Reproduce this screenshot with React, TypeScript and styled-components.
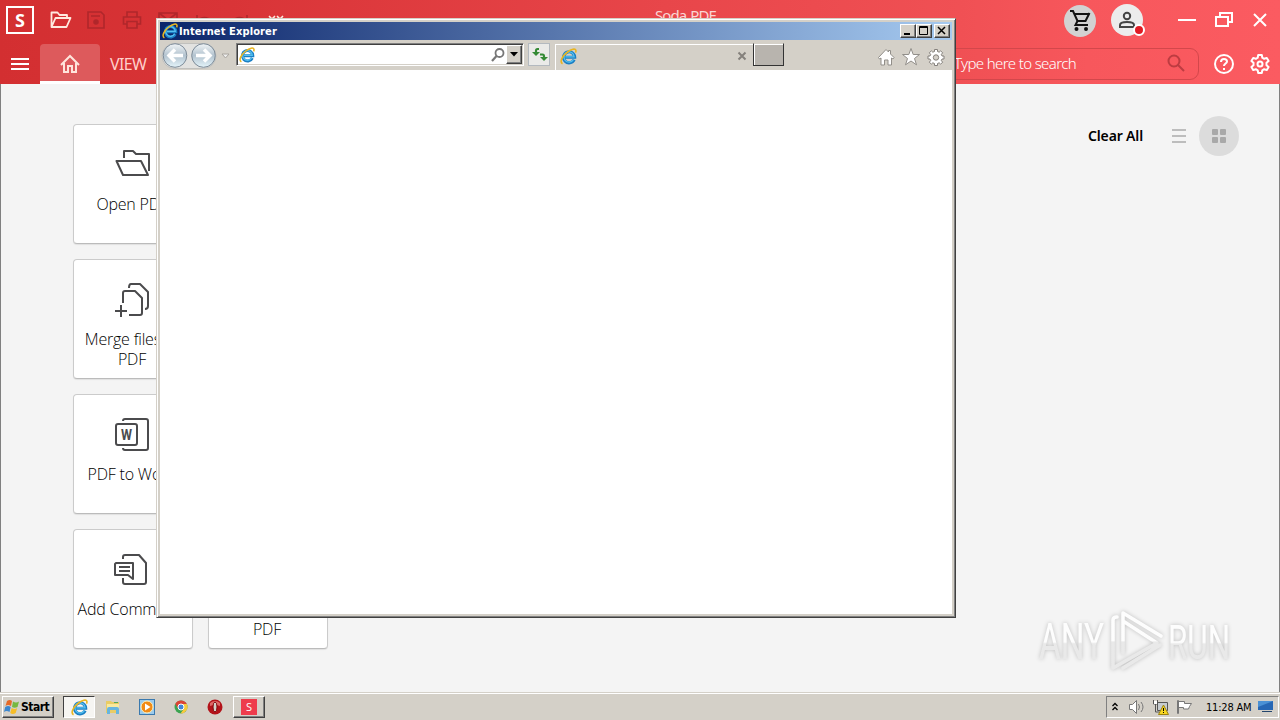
import React from 'react';
import styled, { createGlobalStyle, css } from 'styled-components';

const GlobalStyle = createGlobalStyle`
  * {
    box-sizing: border-box;
  }

  body {
    margin: 0;
    overflow: hidden;
    font-family: 'DejaVu Sans Condensed', 'DejaVu Sans', sans-serif;
    color: #000;
  }

  svg {
    display: block;
    flex-shrink: 0;
  }
`;

const raised = css`
  border: 1px solid;
  border-color: #fff #404040 #404040 #fff;
  box-shadow: inset -1px -1px 0 #808080;
`;

const Desktop = styled.div`
  position: relative;
  display: flex;
  flex-direction: column;
  width: 1280px;
  height: 720px;
  overflow: hidden;
  background-color: #d4d0c8;
`;

const SodaApp = styled.div`
  height: 692px;
  display: flex;
  flex-direction: column;
  background-color: #f4f4f4;
`;

const Header = styled.header`
  height: 84px;
  flex-shrink: 0;
  background: linear-gradient(90deg, #d32f31 0%, #d93437 18%, #e8464a 52%, #f05054 75%, #f7575c 85%, #fb5b61 100%);
`;

const TitleRow = styled.div`
  height: 44px;
  display: grid;
  grid-template-columns: 510px 1fr 510px;
`;

const QuickAccess = styled.div`
  display: flex;
  align-items: flex-start;
  padding: 6px 0 0 6px;
`;

const Logo = styled.div`
  width: 28px;
  height: 28px;
  margin-right: 12px;
  border: 2px solid #fff;
  color: #fff;
  font: bold 18px/24px 'Open Sans', sans-serif;
  text-align: center;
`;

const QuickButton = styled.div<{ $disabled?: boolean }>`
  width: 36px;
  padding: 4px 0 0 4px;
  color: ${({ $disabled }) => ($disabled ? '#b0272b' : '#ffe9df')};
`;

const AppTitle = styled.div`
  padding: 5px 0 0 145px;
  font: 15px/20px 'Noto Sans', sans-serif;
  letter-spacing: -0.9px;
  word-spacing: 1px;
  letter-spacing: -0.9px;
  color: #fbd5d3;
`;

const HeaderActions = styled.div`
  display: flex;
  justify-content: flex-end;
  align-items: flex-start;
  padding-top: 4px;
`;

const RoundButton = styled.div<{ $color: string; $top: number }>`
  position: relative;
  display: flex;
  align-items: center;
  justify-content: center;
  width: 32px;
  height: 32px;
  margin: ${({ $top }) => $top}px 15px 0 0;
  border-radius: 50%;
  background-color: ${({ $color }) => $color};
`;

const StatusDot = styled.span`
  position: absolute;
  right: -2px;
  bottom: 0;
  width: 12px;
  height: 12px;
  border: 2px solid #fff;
  border-radius: 50%;
  background-color: #e01b24;
`;

const WindowControls = styled.div`
  display: flex;
  gap: 18px;
  padding: 7px 11px 0 19px;
`;

const TabRow = styled.div`
  height: 40px;
  display: flex;
`;

const MenuButton = styled.div`
  width: 40px;
  padding: 14px 0 0 11px;
`;

const HomeTab = styled.div`
  width: 60px;
  padding: 9px 0 0 19px;
  border-radius: 4px 4px 0 0;
  background-color: #dd5a5c;
  box-shadow: inset 0 -3px 0 #fff;
`;

const ViewTab = styled.div`
  padding-left: 10px;
  font: 16px/40px 'Noto Sans', sans-serif;
  letter-spacing: -0.6px;
  color: #ffd0cb;
`;

const SearchBox = styled.div`
  display: flex;
  align-items: center;
  justify-content: space-between;
  width: 265px;
  height: 32px;
  margin: 4px 14px 0 auto;
  padding: 0 12px 2px 19px;
  border: 1px solid #d3474b;
  border-radius: 9px;
  font: 300 15px 'Noto Sans', sans-serif;
  letter-spacing: -0.62px;
  color: #fff;
`;

const HeaderIcons = styled.div`
  display: flex;
  gap: 14px;
  padding: 9px 9px 0 0;
`;

const Home = styled.main`
  flex: 1;
  display: flex;
  justify-content: space-between;
  align-items: flex-start;
  border: solid #808080;
  border-width: 0 1px;
  padding: 32px 40px 0 72px;
`;

const CardGrid = styled.div`
  display: grid;
  grid-template-columns: repeat(2, 120px);
  grid-auto-rows: 120px;
  gap: 15px;
  padding-top: 8px;
`;

const Card = styled.div`
  display: flex;
  flex-direction: column;
  align-items: center;
  padding: 20px 2px 0 0;
  border: 1px solid #cbcbcb;
  border-bottom-color: #bbb;
  border-radius: 4px;
  background-color: #fff;
  box-shadow: 0 1px 1px rgba(0, 0, 0, 0.08);
`;

const CardIcon = styled.div`
  width: 40px;
  height: 40px;
  margin-bottom: 9px;
`;

const CardLabel = styled.div`
  height: 20px;
  font: 300 16px/20px 'Open Sans', sans-serif;
  letter-spacing: -0.2px;
  white-space: nowrap;
`;

const ViewOptions = styled.div`
  display: flex;
  align-items: center;
`;

const ClearAll = styled.span`
  margin-right: 29px;
  font: 600 14px/20px 'Noto Sans', sans-serif;
  letter-spacing: -0.15px;
`;

const GridToggle = styled.div`
  display: grid;
  place-items: center;
  width: 40px;
  height: 40px;
  margin-left: 13px;
  border-radius: 50%;
  background-color: #dcdcdc;
`;

const Watermark = styled.div`
  position: absolute;
  left: 1030px;
  top: 602px;
`;

/* Internet Explorer window */

const IeWindow = styled.section`
  position: absolute;
  left: 156px;
  top: 18px;
  width: 800px;
  height: 600px;
  padding: 2px;
  display: flex;
  flex-direction: column;
  border: 1px solid;
  border-color: #d4d0c8 #404040 #404040 #d4d0c8;
  background-color: #d4d0c8;
  box-shadow: inset 1px 1px 0 #fff, inset -1px -1px 0 #808080;
`;

const TitleBar = styled.div`
  display: flex;
  align-items: center;
  height: 18px;
  margin: 1px 1px 0;
  padding: 0 2px;
  background: linear-gradient(90deg, #0a246a, #a6caf0);
  color: #fff;
  font: bold 11px/18px 'DejaVu Sans Condensed', sans-serif;
`;

const TitleText = styled.span`
  flex: 1;
  margin-left: 1px;
  padding-top: 1px;
  letter-spacing: 0.12px;
`;

const CaptionButton = styled.div<{ $gap?: number }>`
  ${raised}
  width: 16px;
  height: 14px;
  margin-left: ${({ $gap = 0 }) => $gap}px;
  background-color: #d4d0c8;
`;

const Toolbar = styled.div`
  display: flex;
  height: 30px;
  padding: 3px 7px 0 2px;
`;

const NavButtons = styled.div`
  width: 75px;
`;

const AddressBar = styled.div`
  display: flex;
  align-items: center;
  width: 288px;
  height: 23px;
  padding: 0 1px 0 2px;
  border: 1px solid;
  border-color: #808080 #fff #fff #808080;
  box-shadow: inset 1px 1px 0 #404040, inset -1px -1px 0 #d4d0c8;
  background-color: #fff;

  svg:nth-child(2) {
    margin-left: auto;
  }
`;

const DropButton = styled.div`
  ${raised}
  display: grid;
  place-items: center;
  width: 16px;
  height: 19px;
  background-color: #d4d0c8;
`;

const RefreshButton = styled.div`
  width: 22px;
  height: 23px;
  margin: 0 5px 0 4px;
  padding: 2px;
  border: 1px solid #b3b9bf;
  background-color: #eaeae8;
`;

const Tab = styled.div`
  display: flex;
  align-items: center;
  justify-content: space-between;
  width: 198px;
  height: 26px;
  margin-top: 1px;
  padding: 0 6px 3px 4px;
  border-top: 1px solid #fff;
  border-left: 1px solid #fff;
`;

const NewTab = styled.div`
  width: 31px;
  height: 23px;
  border: 1px solid #333;
  border-top-color: #d4d0c8;
  background-color: #b8b4ae;
  box-shadow: inset 1px 1px 0 #fff;
`;

const ToolIcons = styled.div`
  display: flex;
  gap: 5px;
  margin: 4px 0 0 auto;
`;

const PageArea = styled.div`
  flex: 1;
  background-color: #fff;
  margin: 0 1px 1px 1px;
`;

/* Taskbar */

const Taskbar = styled.footer`
  display: flex;
  height: 28px;
  padding: 3px 1px 2px 2px;
  border-top: 1px solid #d4d0c8;
  background-color: #d4d0c8;
  box-shadow: inset 0 1px 0 #fff;
`;

const StartButton = styled.div`
  ${raised}
  display: flex;
  align-items: center;
  gap: 1px;
  width: 52px;
  height: 22px;
  margin-right: 9px;
  padding-left: 1px;
  font: bold 12px/20px 'DejaVu Sans Condensed', sans-serif;
  letter-spacing: -0.5px;
`;

const TaskButton = styled.div<{ $state?: 'pressed' | 'raised' }>`
  display: grid;
  place-items: center;
  width: 32px;
  height: 22px;
  margin-right: 2px;
  ${({ $state }) => $state === 'raised' && raised}
  ${({ $state }) =>
    $state === 'pressed' &&
    css`
      border: 1px solid;
      border-color: #404040 #fff #fff #404040;
      background-color: #f6f5f2;
    `}
`;

const SodaTaskIcon = styled.div`
  width: 16px;
  height: 16px;
  background-color: #ee3c4c;
  color: #fff;
  font: 11px/16px 'Open Sans', sans-serif;
  text-align: center;
`;

const Tray = styled.div`
  display: flex;
  align-items: center;
  width: 173px;
  height: 22px;
  margin-left: auto;
  padding: 0 1px 0 4px;
  border: 1px solid;
  border-color: #808080 #fff #fff #808080;
`;

const Clock = styled.span`
  margin: 0 7px 0 12px;
  padding-top: 1px;
  font: 11px/20px 'DejaVu Sans Condensed', sans-serif;
  letter-spacing: -0.2px;
  white-space: nowrap;
`;

const IeIcon = ({ size = 16 }: { size?: number }) => (
  <svg width={size} height={size} viewBox="0 0 16 16" fill="none">
    <path d="M13.3 11a5.2 5.2 0 1 1 .5-2.3H4.8" stroke="#1b7fc4" strokeWidth="3" />
    <path d="M12.7 10.8a4.8 4.8 0 1 1 .6-2.4H5" stroke="#55c1f0" strokeWidth="1.3" />
    <path d="M2.4 14.8C-.6 13.2 2 7.6 6.8 4 10.6 1 14.6.1 15 2.4c.1.7-.1 1.300-.4 2" stroke="#e9b521" strokeWidth="1.5" />
  </svg>
);

const FolderOutline = () => (
  <svg width="22" height="20" viewBox="0 0 22 20" fill="none" stroke="currentColor" strokeWidth="1.8" strokeLinejoin="round">
    <path d="M1.500 17V2.500h6l2 2.500H17v3M1.500 17L5.500 8H20.500L16.500 17z" />
  </svg>
);

const SaveIcon = () => (
  <svg width="20" height="20" viewBox="0 0 20 20" fill="none" stroke="currentColor" strokeWidth="1.6">
    <path d="M2 2h13l3 3v13H2zM5 6h9" />
    <circle cx="10" cy="12" r="2" fill="currentColor" />
  </svg>
);

const PrintIcon = () => (
  <svg width="20" height="20" viewBox="0 0 20 20" fill="none" stroke="currentColor" strokeWidth="1.6">
    <path d="M5 7V2h10v5M5 14H1.500V7h17v7H15M5 11.500h10V18H5z" />
  </svg>
);

const MailIcon = () => (
  <svg width="20" height="20" viewBox="0 0 20 20" fill="none" stroke="currentColor" strokeWidth="1.6">
    <path d="M1 3h18v14H1zM1 3l9 7 9-7" />
  </svg>
);

const CurveArrow = ({ flip }: { flip?: boolean }) => (
  <svg width="20" height="20" viewBox="0 0 20 20" fill="none" stroke="currentColor" strokeWidth="1.6">
    <path d={flip ? 'M2 16C2 6 12 6 17 11M17 5v6h-6' : 'M18 16C18 6 8 6 3 11M3 5v6h6'} />
  </svg>
);

const ChevronMarks = () => (
  <svg width="20" height="20" viewBox="0 0 20 20" fill="none" stroke="currentColor" strokeWidth="1.6">
    <path d="M3 6l3 3 3-3M11 6l3 3 3-3" />
  </svg>
);

const gearPath =
  'M10.200 2h3.600l.5 2.700 1.900 1.100 2.600-.9 1.800 3.100-2.100 1.800v2.400l2.100 1.800-1.800 3.100-2.600-.9-1.900 1.100-.5 2.700h-3.600l-.5-2.700-1.900-1.100-2.600.9-1.800-3.100 2.100-1.800V9.800L3.400 8l1.800-3.100 2.600.9 1.900-1.100z';

const CardArt = ({ kind }: { kind: string }) => (
  <svg width="40" height="40" viewBox="0 0 40 40" fill="none" stroke="#4b4b4d" strokeWidth="2" strokeLinejoin="round">
    {kind === 'open' && <path d="M12 13V6h9l3 3h13v17M4.500 16h24.500l7 14H11z" />}
    {kind === 'merge' && <path d="M11 23v-10q0-2 2-2h10l7 7v15q0 2-2 2H17M17 8q0-4 2-4h9l8 8v14q0 3-3 3M3 31h12M9 25v12" />}
    {kind === 'word' && (
      <>
        <path d="M11 6q0-2 2-2h21q2 0 2 2v27q0 2-2 2H13q-2 0-2-2" />
        <rect x="4" y="9" width="21" height="21" rx="2" />
        <text x="9" y="25" textLength="11" lengthAdjust="spacingAndGlyphs" fontFamily="Roboto, sans-serif" fontSize="14.500" fontWeight="700" fill="#4b4b4d" stroke="none">W</text>
      </>
    )}
    {kind === 'comment' && (
      <>
        <path d="M11 9V7q0-2 2-2h14l7 8v19q0 2-2 2H13q-2 0-2-2v-4" />
        <path d="M4 13h17v16l-5-4H3V14zM7 17h11M7 21h11" />
      </>
    )}
  </svg>
);

const cards = [
  { kind: 'open', lines: ['Open PDF'] },
  { kind: '', lines: [] },
  { kind: 'merge', lines: ['Merge files to', 'PDF'] },
  { kind: '', lines: [] },
  { kind: 'word', lines: ['PDF to Word'] },
  { kind: '', lines: [] },
  { kind: 'comment', lines: ['Add Comments'] },
  { kind: '', lines: ['', 'PDF'] },
];

const SodaHeader = () => (
  <Header>
    <TitleRow>
      <QuickAccess>
        <Logo>S</Logo>
        <QuickButton><FolderOutline /></QuickButton>
        <QuickButton $disabled><SaveIcon /></QuickButton>
        <QuickButton $disabled><PrintIcon /></QuickButton>
        <QuickButton $disabled><MailIcon /></QuickButton>
        <QuickButton $disabled><CurveArrow /></QuickButton>
        <QuickButton $disabled><CurveArrow flip /></QuickButton>
        <QuickButton><ChevronMarks /></QuickButton>
      </QuickAccess>
      <AppTitle>Soda PDF</AppTitle>
      <HeaderActions>
        <RoundButton $color="#d2d2d2" $top={1}>
          <svg width="24" height="24" viewBox="0 0 24 24" fill="none" stroke="#111" strokeWidth="2">
            <path d="M2 2h3l4.500 10h8L21.500 4M6 5h15M9.500 12l-2 4H20" />
            <circle cx="8.500" cy="20" r="1" fill="#111" />
            <circle cx="18" cy="20" r="1" fill="#111" />
          </svg>
        </RoundButton>
        <RoundButton $color="#ececec" $top={0}>
          <svg width="20" height="20" viewBox="0 0 20 20" fill="none" stroke="#444" strokeWidth="2">
            <circle cx="10" cy="6" r="3.200" />
            <path d="M3 17v-2q0-3 7-3t7 3v2z" />
          </svg>
          <StatusDot />
        </RoundButton>
        <WindowControls>
          <svg width="20" height="18" stroke="#fff" strokeWidth="2"><path d="M1 9h18" /></svg>
          <svg width="18" height="18" fill="none" stroke="#fff" strokeWidth="2"><path d="M1 6h12v9H1zM5 6V2h12v9h-4" /></svg>
          <svg width="18" height="18" stroke="#fff" strokeWidth="2"><path d="M3 3l12 12M15 3L3 15" /></svg>
        </WindowControls>
      </HeaderActions>
    </TitleRow>
    <TabRow>
      <MenuButton>
        <svg width="18" height="13" stroke="#fff" strokeWidth="2"><path d="M0 1h18M0 6h18M0 11h18" /></svg>
      </MenuButton>
      <HomeTab>
        <svg width="22" height="22" viewBox="0 0 22 22" fill="none" stroke="#ffe5dc" strokeWidth="2">
          <path d="M2 12l9-9 9 9M5 10v9h4v-6h4v6h4v-9" />
        </svg>
      </HomeTab>
      <ViewTab>VIEW</ViewTab>
      <SearchBox>
        <span>Type here to search</span>
        <svg width="20" height="20" viewBox="0 0 20 20" fill="none" stroke="#bd3c41" strokeWidth="2">
          <circle cx="8" cy="8" r="5.500" />
          <path d="M12 12l6 6" />
        </svg>
      </SearchBox>
      <HeaderIcons>
        <svg width="22" height="22" viewBox="0 0 22 22" fill="none" stroke="#fff" strokeWidth="2">
          <circle cx="11" cy="11" r="9" />
          <path d="M8 9q0-3 3-3t3 2.500c0 2-3 2.200-3 4.500M11 15v2" />
        </svg>
        <svg width="22" height="22" viewBox="1 0 22 22" fill="none" stroke="#fff" strokeWidth="2" strokeLinejoin="round">
          <path d={gearPath} />
          <circle cx="12" cy="11" r="2.500" />
        </svg>
      </HeaderIcons>
    </TabRow>
  </Header>
);

const AnyRun = () => (
  <Watermark>
    <svg width="250" height="80" viewBox="0 0 250 80" style={{ filter: 'drop-shadow(0 0 2px rgba(0,0,0,.22))' }}>
      <defs>
        <linearGradient id="fade" x1="0" y1="0" x2="0" y2="1">
          <stop offset=".5" stopColor="#fdfdfd" />
          <stop offset=".53" stopColor="#e9e9e9" />
        </linearGradient>
      </defs>
      <g fill="url(#fade)" fontFamily="Roboto, sans-serif" fontSize="49">
        <text transform="translate(9 57) scale(.68 1)">ANY</text>
        <text transform="translate(138 57) scale(.64 1)">RUN</text>
      </g>
      <g fill="none" stroke="url(#fade)" strokeWidth="3.500" strokeLinejoin="round" strokeLinecap="round">
        <path d="M93 51V11l38 23M93 19l34 22-44 25V18q0-3 4-3M93 66l37-23" />
      </g>
    </svg>
  </Watermark>
);

const InternetExplorer = () => (
  <IeWindow>
    <TitleBar>
      <IeIcon />
      <TitleText>Internet Explorer</TitleText>
      <CaptionButton>
        <svg width="14" height="12"><path d="M3 8h6v2H3z" /></svg>
      </CaptionButton>
      <CaptionButton>
        <svg width="14" height="12" fill="none" stroke="#000"><path d="M2.500 1.500h8v8h-8zM2 2.500h9" /></svg>
      </CaptionButton>
      <CaptionButton $gap={2}>
        <svg width="14" height="12" stroke="#000" strokeWidth="1.500"><path d="M3 2l7 7M10 2L3 9" /></svg>
      </CaptionButton>
    </TitleBar>
    <Toolbar>
      <NavButtons>
        <svg width="75" height="27" viewBox="0 0 75 27">
          <defs>
            <linearGradient id="nav" x1="0" y1="0" x2="0" y2="1">
              <stop offset="0" stopColor="#f1f5f7" />
              <stop offset=".5" stopColor="#b3c3cf" />
              <stop offset="1" stopColor="#e4f4fa" />
            </linearGradient>
          </defs>
          <rect x="1" y="0.500" width="54" height="25" rx="12.500" fill="#e2e2e0" stroke="#c0c0bd" />
          <g fill="url(#nav)" stroke="#7d8b98">
            <circle cx="14" cy="12.500" r="11.800" />
            <circle cx="42.500" cy="12.500" r="11.800" />
          </g>
          <g fill="none" stroke="#fff" strokeWidth="3.500">
            <path d="M22 12.500H8M14 6.500l-6 6 6 6" />
            <path d="M35 12.500h14M43 6.500l6 6-6 6" />
          </g>
          <path d="M61 11h7l-3.500 4z" fill="#eee" stroke="#aaa6a0" />
        </svg>
      </NavButtons>
      <AddressBar>
        <IeIcon />
        <svg width="16" height="16" viewBox="0 0 16 16" fill="none" stroke="#777" strokeWidth="1.800">
          <circle cx="9.500" cy="6" r="4" />
          <path d="M6.500 9L2 14" strokeWidth="2.200" />
        </svg>
        <DropButton>
          <svg width="8" height="5"><path d="M0 0h8L4 4.500z" /></svg>
        </DropButton>
      </AddressBar>
      <RefreshButton>
        <svg width="18" height="17" viewBox="0 0 18 17" fill="none" stroke="#348a35" strokeWidth="2.200">
          <path d="M8 3H6.500q-1.500 0-1.500 2v2" />
          <path d="M1 6h8L5 10z" fill="#348a35" stroke="none" />
          <path d="M9 8.500h2.500q1.500 0 1.500 2v1" />
          <path d="M9 11h8l-4 4z" fill="#348a35" stroke="none" />
        </svg>
      </RefreshButton>
      <Tab>
        <IeIcon size={17} />
        <svg width="10" height="10" stroke="#85817c" strokeWidth="2"><path d="M1.500 1.500l7 7M8.500 1.500l-7 7" /></svg>
      </Tab>
      <NewTab />
      <ToolIcons>
        <svg width="20" height="20" viewBox="0 0 20 20" fill="#fff" stroke="#918e89">
          <path d="M2.500 10.500l7.500-8 2.500 2.500V3.500h2v3.500l3.500 3.500-1 1.500-1.500-1v7H12v-5H8.500v5H5v-7l-1.500 1z" />
        </svg>
        <svg width="20" height="20" viewBox="0 0 20 20" fill="#fff" stroke="#918e89">
          <path d="M10 1.500l2.200 6h6.300l-5 4 2 6.300-5.500-3.800-5.500 3.800 2-6.300-5-4h6.300z" />
        </svg>
        <svg width="20" height="20" viewBox="2 1 20 20" fill="#fff" stroke="#85817c" strokeLinejoin="round">
          <path d="M10.500 3.500h3v2l1.700.7 1.400-1.400 2.100 2.100-1.400 1.400.7 1.700h2v3h-2l-.7 1.700 1.400 1.400-2.100 2.100-1.400-1.400-1.700.7v2h-3v-2l-1.700-.7-1.400 1.400-2.100-2.100 1.400-1.400-.7-1.700h-2v-3h2l.7-1.700-1.400-1.400 2.100-2.100 1.400 1.400 1.700-.7z" />
          <circle cx="12" cy="11.500" r="2.700" fill="#d4d0c8" />
        </svg>
      </ToolIcons>
    </Toolbar>
    <PageArea />
  </IeWindow>
);

const WindowsTaskbar = () => (
  <Taskbar>
    <StartButton>
      <svg width="16" height="16" viewBox="0 0 16 16">
        <path d="M3 2q3-2 5 0L7 7Q4 5 1.500 7z" fill="#e66a28" />
        <path d="M9 2.500q3 2 6 0L13.500 8q-3 1.500-5.500 0z" fill="#76b83f" />
        <path d="M1.200 8q3-2 5.500 0l-1.200 5q-3-2-5.500 0z" fill="#3c87cf" />
        <path d="M7.700 9q3 2 5.500 0l-1.500 5q-3 2-5.500 0z" fill="#f6bd28" />
      </svg>
      Start
    </StartButton>
    <TaskButton $state="pressed"><IeIcon size={17} /></TaskButton>
    <TaskButton>
      <svg width="16" height="16" viewBox="0 0 16 16">
        <path d="M1 2h5l1 1h7v11H1z" fill="#e9cc65" />
        <path d="M2 5h12v5H2z" fill="#f9e99d" />
        <path d="M2 15v-5q0-2 2-2h8q2 0 2 2v5h-3v-4H5v4z" fill="#67b5df" />
        <path d="M9 3h4v1H9z" fill="#55a75c" />
      </svg>
    </TaskButton>
    <TaskButton>
      <svg width="16" height="16" viewBox="0 0 16 16">
        <rect x=".5" y=".5" width="15" height="15" fill="#9bcbed" stroke="#3a79ae" />
        <circle cx="8" cy="8" r="6" fill="#f18b16" stroke="#fff1bd" />
        <path d="M6 4.500L11.500 8 6 11.500z" fill="#fff" />
      </svg>
    </TaskButton>
    <TaskButton>
      <svg width="14" height="14" viewBox="0 0 14 14">
        <circle cx="7" cy="7" r="6.500" fill="#3ba351" />
        <path d="M1.300 3.800A6.500 6.500 0 0 1 12.800 4H7L4 8.500z" fill="#dc4335" />
        <path d="M12.800 4A6.500 6.500 0 0 1 6.500 13.500L10 8.500 7 4z" fill="#f7ca3d" />
        <circle cx="7" cy="7" r="3" fill="#4285d8" stroke="#fff" />
      </svg>
    </TaskButton>
    <TaskButton>
      <svg width="16" height="16" viewBox="0 0 16 16">
        <circle cx="8" cy="8" r="7.500" fill="#b3131a" />
        <path d="M3 4q5-4 10 0v3q-5-2-10 0z" fill="#df6867" />
        <ellipse cx="8" cy="8" rx="2" ry="5" fill="#d4d0c8" stroke="#81070d" />
      </svg>
    </TaskButton>
    <TaskButton $state="raised"><SodaTaskIcon>S</SodaTaskIcon></TaskButton>
    <Tray>
      <svg width="8" height="10" fill="none" stroke="#000" strokeWidth="1.300"><path d="M1.500 4L4 1.500 6.500 4M1.500 8L4 5.500 6.500 8" /></svg>
      <svg width="18" height="16" viewBox="0 0 18 16" fill="#fff" stroke="#777" style={{ marginLeft: 9 }}>
        <path d="M1.500 5.500h3l4-4v13l-4-4h-3z" />
        <path d="M10.500 5q2 3 0 6M13 3q4 5 0 10" fill="none" />
      </svg>
      <svg width="18" height="16" viewBox="0 0 18 16" style={{ marginLeft: 6 }}>
        <path d="M5.500 3.500h10v8h-10z" fill="#c7ccd0" stroke="#555" />
        <path d="M1.500 1v4h4V1M3.500 5v8h4" fill="none" stroke="#555" />
        <path d="M2 2h3v3H2z" fill="#fff" />
        <path d="M11.500 6l5 9.500h-10z" fill="#f8d721" stroke="#9b8210" />
        <path d="M11 9h1v3h-1zM11 13h1v1h-1z" />
      </svg>
      <svg width="18" height="16" viewBox="0 0 18 16" fill="#fff" stroke="#777" style={{ marginLeft: 6 }}>
        <path d="M1.500 1.500h1v13h-1zM2.500 2.500h6v2h7l-2 3-1 2.500h-5V8.500h-5z" />
      </svg>
      <Clock>11:28 AM</Clock>
      <svg width="16" height="14" viewBox="0 0 16 14">
        <path d="M0 1h15v9H0z" fill="#2767b4" />
        <path d="M0 1h15L0 7z" fill="#4b91d5" />
        <path d="M4 11h10v1H4z" fill="#23456c" />
      </svg>
    </Tray>
  </Taskbar>
);

const App: React.FC = () => {
  return (
    <>
      <GlobalStyle />
      <Desktop>
        <SodaApp>
          <SodaHeader />
          <Home>
            <CardGrid>
              {cards.map((card, index) => (
                <Card key={index}>
                  <CardIcon><CardArt kind={card.kind} /></CardIcon>
                  {card.lines.map((line, i) => (
                    <CardLabel key={i}>{line}</CardLabel>
                  ))}
                </Card>
              ))}
            </CardGrid>
            <ViewOptions>
              <ClearAll>Clear All</ClearAll>
              <svg width="14" height="14" stroke="#bdbdbd" strokeWidth="2"><path d="M0 1h14M0 7h14M0 13h14" /></svg>
              <GridToggle>
                <svg width="14" height="14" fill="#a9a9a9">
                  <rect width="6" height="6" rx="1" />
                  <rect x="8" width="6" height="6" rx="1" />
                  <rect y="8" width="6" height="6" rx="1" />
                  <rect x="8" y="8" width="6" height="6" rx="1" />
                </svg>
              </GridToggle>
            </ViewOptions>
          </Home>
        </SodaApp>
        <WindowsTaskbar />
        <AnyRun />
        <InternetExplorer />
      </Desktop>
    </>
  );
};

export default App;
